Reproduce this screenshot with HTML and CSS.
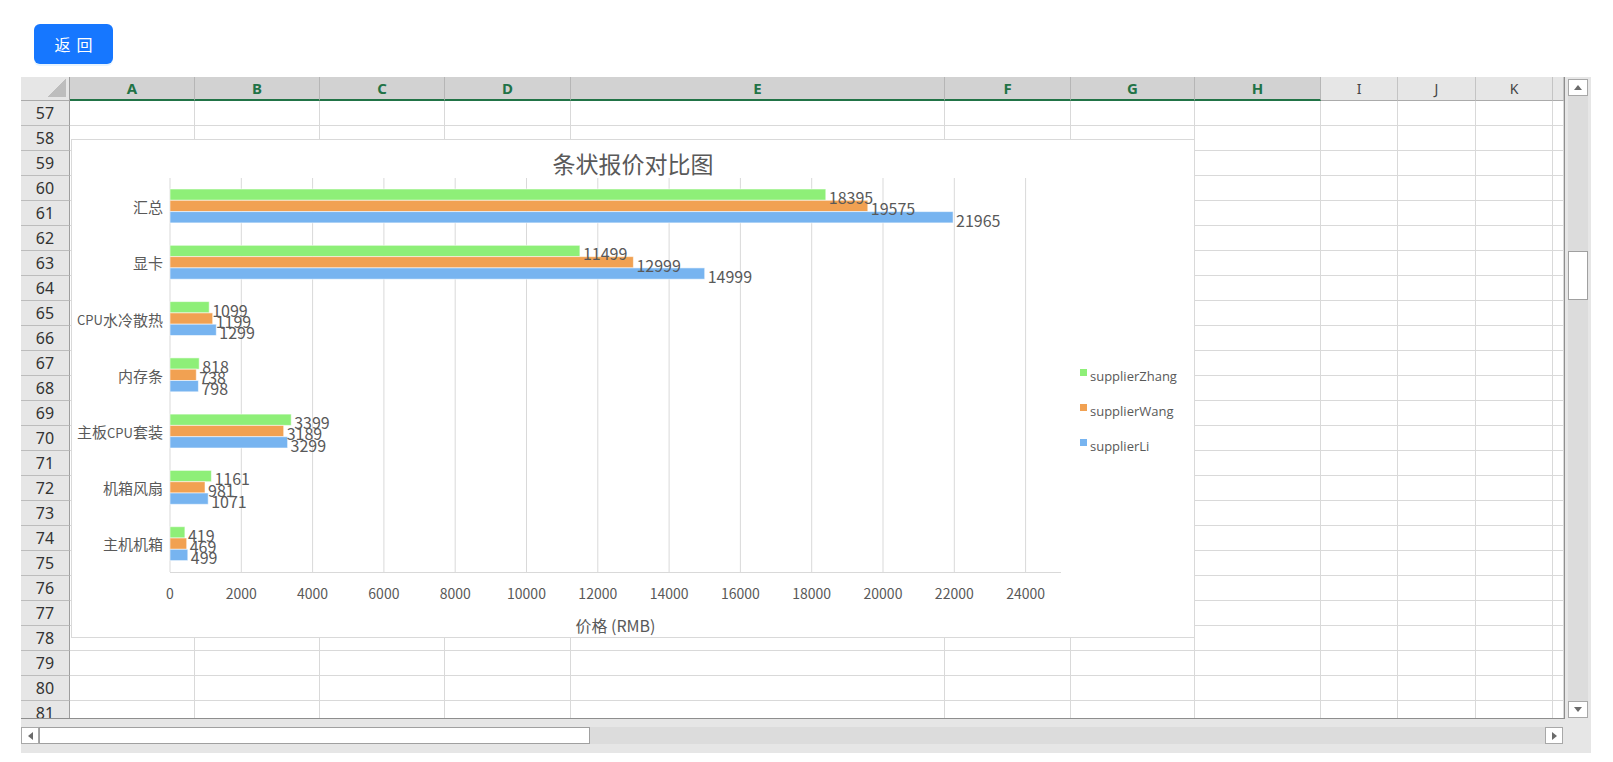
FILE: index.html
```html
<!DOCTYPE html>
<html lang="zh-CN">
<head>
<meta charset="utf-8">
<title>条状报价对比图</title>
<link rel="stylesheet" href="styles.css">
</head>
<body>
<div class="toolbar"><button class="back-btn">返回</button></div>

<div class="sheet">
  <div class="grid">
    <div class="hdr">
      <div class="corner"></div>
      <div class="ch sel">A</div><div class="ch sel">B</div><div class="ch sel">C</div><div class="ch sel">D</div>
      <div class="ch sel">E</div><div class="ch sel">F</div><div class="ch sel">G</div><div class="ch sel">H</div>
      <div class="ch">I</div><div class="ch">J</div><div class="ch">K</div><div class="ch"></div>
    </div>
    <div class="body">
      <div class="row"><div class="rh">57</div><div class="c"></div><div class="c"></div><div class="c"></div><div class="c"></div><div class="c"></div><div class="c"></div><div class="c"></div><div class="c"></div><div class="c"></div><div class="c"></div><div class="c"></div><div class="c"></div></div>
      <div class="row"><div class="rh">58</div><div class="c"></div><div class="c"></div><div class="c"></div><div class="c"></div><div class="c"></div><div class="c"></div><div class="c"></div><div class="c"></div><div class="c"></div><div class="c"></div><div class="c"></div><div class="c"></div></div>
      <div class="row"><div class="rh">59</div><div class="c"></div><div class="c"></div><div class="c"></div><div class="c"></div><div class="c"></div><div class="c"></div><div class="c"></div><div class="c"></div><div class="c"></div><div class="c"></div><div class="c"></div><div class="c"></div></div>
      <div class="row"><div class="rh">60</div><div class="c"></div><div class="c"></div><div class="c"></div><div class="c"></div><div class="c"></div><div class="c"></div><div class="c"></div><div class="c"></div><div class="c"></div><div class="c"></div><div class="c"></div><div class="c"></div></div>
      <div class="row"><div class="rh">61</div><div class="c"></div><div class="c"></div><div class="c"></div><div class="c"></div><div class="c"></div><div class="c"></div><div class="c"></div><div class="c"></div><div class="c"></div><div class="c"></div><div class="c"></div><div class="c"></div></div>
      <div class="row"><div class="rh">62</div><div class="c"></div><div class="c"></div><div class="c"></div><div class="c"></div><div class="c"></div><div class="c"></div><div class="c"></div><div class="c"></div><div class="c"></div><div class="c"></div><div class="c"></div><div class="c"></div></div>
      <div class="row"><div class="rh">63</div><div class="c"></div><div class="c"></div><div class="c"></div><div class="c"></div><div class="c"></div><div class="c"></div><div class="c"></div><div class="c"></div><div class="c"></div><div class="c"></div><div class="c"></div><div class="c"></div></div>
      <div class="row"><div class="rh">64</div><div class="c"></div><div class="c"></div><div class="c"></div><div class="c"></div><div class="c"></div><div class="c"></div><div class="c"></div><div class="c"></div><div class="c"></div><div class="c"></div><div class="c"></div><div class="c"></div></div>
      <div class="row"><div class="rh">65</div><div class="c"></div><div class="c"></div><div class="c"></div><div class="c"></div><div class="c"></div><div class="c"></div><div class="c"></div><div class="c"></div><div class="c"></div><div class="c"></div><div class="c"></div><div class="c"></div></div>
      <div class="row"><div class="rh">66</div><div class="c"></div><div class="c"></div><div class="c"></div><div class="c"></div><div class="c"></div><div class="c"></div><div class="c"></div><div class="c"></div><div class="c"></div><div class="c"></div><div class="c"></div><div class="c"></div></div>
      <div class="row"><div class="rh">67</div><div class="c"></div><div class="c"></div><div class="c"></div><div class="c"></div><div class="c"></div><div class="c"></div><div class="c"></div><div class="c"></div><div class="c"></div><div class="c"></div><div class="c"></div><div class="c"></div></div>
      <div class="row"><div class="rh">68</div><div class="c"></div><div class="c"></div><div class="c"></div><div class="c"></div><div class="c"></div><div class="c"></div><div class="c"></div><div class="c"></div><div class="c"></div><div class="c"></div><div class="c"></div><div class="c"></div></div>
      <div class="row"><div class="rh">69</div><div class="c"></div><div class="c"></div><div class="c"></div><div class="c"></div><div class="c"></div><div class="c"></div><div class="c"></div><div class="c"></div><div class="c"></div><div class="c"></div><div class="c"></div><div class="c"></div></div>
      <div class="row"><div class="rh">70</div><div class="c"></div><div class="c"></div><div class="c"></div><div class="c"></div><div class="c"></div><div class="c"></div><div class="c"></div><div class="c"></div><div class="c"></div><div class="c"></div><div class="c"></div><div class="c"></div></div>
      <div class="row"><div class="rh">71</div><div class="c"></div><div class="c"></div><div class="c"></div><div class="c"></div><div class="c"></div><div class="c"></div><div class="c"></div><div class="c"></div><div class="c"></div><div class="c"></div><div class="c"></div><div class="c"></div></div>
      <div class="row"><div class="rh">72</div><div class="c"></div><div class="c"></div><div class="c"></div><div class="c"></div><div class="c"></div><div class="c"></div><div class="c"></div><div class="c"></div><div class="c"></div><div class="c"></div><div class="c"></div><div class="c"></div></div>
      <div class="row"><div class="rh">73</div><div class="c"></div><div class="c"></div><div class="c"></div><div class="c"></div><div class="c"></div><div class="c"></div><div class="c"></div><div class="c"></div><div class="c"></div><div class="c"></div><div class="c"></div><div class="c"></div></div>
      <div class="row"><div class="rh">74</div><div class="c"></div><div class="c"></div><div class="c"></div><div class="c"></div><div class="c"></div><div class="c"></div><div class="c"></div><div class="c"></div><div class="c"></div><div class="c"></div><div class="c"></div><div class="c"></div></div>
      <div class="row"><div class="rh">75</div><div class="c"></div><div class="c"></div><div class="c"></div><div class="c"></div><div class="c"></div><div class="c"></div><div class="c"></div><div class="c"></div><div class="c"></div><div class="c"></div><div class="c"></div><div class="c"></div></div>
      <div class="row"><div class="rh">76</div><div class="c"></div><div class="c"></div><div class="c"></div><div class="c"></div><div class="c"></div><div class="c"></div><div class="c"></div><div class="c"></div><div class="c"></div><div class="c"></div><div class="c"></div><div class="c"></div></div>
      <div class="row"><div class="rh">77</div><div class="c"></div><div class="c"></div><div class="c"></div><div class="c"></div><div class="c"></div><div class="c"></div><div class="c"></div><div class="c"></div><div class="c"></div><div class="c"></div><div class="c"></div><div class="c"></div></div>
      <div class="row"><div class="rh">78</div><div class="c"></div><div class="c"></div><div class="c"></div><div class="c"></div><div class="c"></div><div class="c"></div><div class="c"></div><div class="c"></div><div class="c"></div><div class="c"></div><div class="c"></div><div class="c"></div></div>
      <div class="row"><div class="rh">79</div><div class="c"></div><div class="c"></div><div class="c"></div><div class="c"></div><div class="c"></div><div class="c"></div><div class="c"></div><div class="c"></div><div class="c"></div><div class="c"></div><div class="c"></div><div class="c"></div></div>
      <div class="row"><div class="rh">80</div><div class="c"></div><div class="c"></div><div class="c"></div><div class="c"></div><div class="c"></div><div class="c"></div><div class="c"></div><div class="c"></div><div class="c"></div><div class="c"></div><div class="c"></div><div class="c"></div></div>
      <div class="row"><div class="rh">81</div><div class="c"></div><div class="c"></div><div class="c"></div><div class="c"></div><div class="c"></div><div class="c"></div><div class="c"></div><div class="c"></div><div class="c"></div><div class="c"></div><div class="c"></div><div class="c"></div></div>

      <div class="chart">
        <svg width="1122" height="497" viewBox="1 1 1122 497" xmlns="http://www.w3.org/2000/svg">
          <text class="title" x="562" y="24" text-anchor="middle" dominant-baseline="central">条状报价对比图</text>
          <g class="gridlines">
            <line x1="99" y1="39" x2="99" y2="433"/>
            <line x1="170.3" y1="39" x2="170.3" y2="433"/>
            <line x1="241.6" y1="39" x2="241.6" y2="433"/>
            <line x1="312.9" y1="39" x2="312.9" y2="433"/>
            <line x1="384.2" y1="39" x2="384.2" y2="433"/>
            <line x1="455.5" y1="39" x2="455.5" y2="433"/>
            <line x1="526.8" y1="39" x2="526.8" y2="433"/>
            <line x1="598.1" y1="39" x2="598.1" y2="433"/>
            <line x1="669.4" y1="39" x2="669.4" y2="433"/>
            <line x1="740.7" y1="39" x2="740.7" y2="433"/>
            <line x1="812" y1="39" x2="812" y2="433"/>
            <line x1="883.3" y1="39" x2="883.3" y2="433"/>
            <line x1="954.6" y1="39" x2="954.6" y2="433"/>
            <line x1="99" y1="433.5" x2="990" y2="433.5"/>
          </g>
          <g class="bars">
            <rect class="g" x="99" y="50" width="655.8" height="11.3"/>
            <rect class="o" x="99" y="61.3" width="697.8" height="11.3"/>
            <rect class="b" x="99" y="72.6" width="783.1" height="11.3"/>
            <rect class="g" x="99" y="106.3" width="409.9" height="11.3"/>
            <rect class="o" x="99" y="117.6" width="463.4" height="11.3"/>
            <rect class="b" x="99" y="128.9" width="534.7" height="11.3"/>
            <rect class="g" x="99" y="162.6" width="39.2" height="11.3"/>
            <rect class="o" x="99" y="173.9" width="42.7" height="11.3"/>
            <rect class="b" x="99" y="185.2" width="46.3" height="11.3"/>
            <rect class="g" x="99" y="218.9" width="29.2" height="11.3"/>
            <rect class="o" x="99" y="230.2" width="26.3" height="11.3"/>
            <rect class="b" x="99" y="241.5" width="28.4" height="11.3"/>
            <rect class="g" x="99" y="275.1" width="121.2" height="11.3"/>
            <rect class="o" x="99" y="286.4" width="113.7" height="11.3"/>
            <rect class="b" x="99" y="297.7" width="117.6" height="11.3"/>
            <rect class="g" x="99" y="331.4" width="41.4" height="11.3"/>
            <rect class="o" x="99" y="342.7" width="35" height="11.3"/>
            <rect class="b" x="99" y="354" width="38.2" height="11.3"/>
            <rect class="g" x="99" y="387.7" width="14.9" height="11.3"/>
            <rect class="o" x="99" y="399" width="16.7" height="11.3"/>
            <rect class="b" x="99" y="410.3" width="17.8" height="11.3"/>
          </g>
          <g class="cat" text-anchor="end">
            <text x="92" y="67" dominant-baseline="central">汇总</text>
            <text x="92" y="123.4" dominant-baseline="central">显卡</text>
            <text x="92" y="180" dominant-baseline="central"><tspan class="latin">CPU</tspan>水冷散热</text>
            <text x="92" y="236" dominant-baseline="central">内存条</text>
            <text x="92" y="292.5" dominant-baseline="central">主板<tspan class="latin">CPU</tspan>套装</text>
            <text x="92" y="348.6" dominant-baseline="central">机箱风扇</text>
            <text x="92" y="404.9" dominant-baseline="central">主机机箱</text>
          </g>
          <g class="val">
            <text x="757.8" y="58" dominant-baseline="central">18395</text>
            <text x="799.8" y="69.3" dominant-baseline="central">19575</text>
            <text x="885.1" y="80.6" dominant-baseline="central">21965</text>
            <text x="511.9" y="114.2" dominant-baseline="central">11499</text>
            <text x="565.4" y="125.5" dominant-baseline="central">12999</text>
            <text x="636.7" y="136.8" dominant-baseline="central">14999</text>
            <text x="141.2" y="170.5" dominant-baseline="central">1099</text>
            <text x="144.7" y="181.8" dominant-baseline="central">1199</text>
            <text x="148.3" y="193.1" dominant-baseline="central">1299</text>
            <text x="131.2" y="226.8" dominant-baseline="central">818</text>
            <text x="128.3" y="238.1" dominant-baseline="central">738</text>
            <text x="130.4" y="249.4" dominant-baseline="central">798</text>
            <text x="223.2" y="283.1" dominant-baseline="central">3399</text>
            <text x="215.7" y="294.4" dominant-baseline="central">3189</text>
            <text x="219.6" y="305.7" dominant-baseline="central">3299</text>
            <text x="143.4" y="339.4" dominant-baseline="central">1161</text>
            <text x="137" y="350.7" dominant-baseline="central">981</text>
            <text x="140.2" y="362" dominant-baseline="central">1071</text>
            <text x="116.9" y="395.7" dominant-baseline="central">419</text>
            <text x="118.7" y="407" dominant-baseline="central">469</text>
            <text x="119.8" y="418.3" dominant-baseline="central">499</text>
          </g>
          <g class="tick" text-anchor="middle">
            <text x="99" y="454" dominant-baseline="central">0</text>
            <text x="170.3" y="454" dominant-baseline="central">2000</text>
            <text x="241.6" y="454" dominant-baseline="central">4000</text>
            <text x="312.9" y="454" dominant-baseline="central">6000</text>
            <text x="384.2" y="454" dominant-baseline="central">8000</text>
            <text x="455.5" y="454" dominant-baseline="central">10000</text>
            <text x="526.8" y="454" dominant-baseline="central">12000</text>
            <text x="598.1" y="454" dominant-baseline="central">14000</text>
            <text x="669.4" y="454" dominant-baseline="central">16000</text>
            <text x="740.7" y="454" dominant-baseline="central">18000</text>
            <text x="812" y="454" dominant-baseline="central">20000</text>
            <text x="883.3" y="454" dominant-baseline="central">22000</text>
            <text x="954.6" y="454" dominant-baseline="central">24000</text>
          </g>
          <text class="axis-title" x="544.5" y="486" text-anchor="middle" dominant-baseline="central">价格 (RMB)</text>
          <g class="legend">
            <rect class="g" x="1009" y="230" width="7" height="7"/>
            <text x="1019" y="237" dominant-baseline="central">supplierZhang</text>
            <rect class="o" x="1009" y="265" width="7" height="7"/>
            <text x="1019" y="272" dominant-baseline="central">supplierWang</text>
            <rect class="b" x="1009" y="300" width="7" height="7"/>
            <text x="1019" y="307" dominant-baseline="central">supplierLi</text>
          </g>
        </svg>
      </div>
    </div>
  </div>

  <div class="vscroll">
    <div class="vtrack">
      <div class="sbtn"><span class="arr up"></span></div>
      <div class="vthumb"></div>
      <div class="sbtn down-btn"><span class="arr down"></span></div>
    </div>
  </div>

  <div class="hscroll">
    <div class="htrack">
      <div class="sbtn h"><span class="arr left"></span></div>
      <div class="hthumb"></div>
      <div class="sbtn h right-btn"><span class="arr right"></span></div>
    </div>
  </div>
</div>
</body>
</html>
```

FILE: styles.css
```css
html, body {
  margin: 0;
  padding: 0;
  background: #ffffff;
}
body {
  font-family: "Noto Sans CJK SC", "Noto Sans", sans-serif;
  color: #333;
}

.toolbar {
  padding: 24px 0 0 34px;
  height: 40px;
}
.back-btn {
  width: 79px;
  height: 40px;
  border: none;
  border-radius: 6px;
  background: #1677ff;
  color: #fff;
  font-family: "Noto Sans CJK SC", sans-serif;
  font-size: 16px;
  letter-spacing: 6px;
  padding: 0 0 0 6px;
  box-shadow: 0 2px 0 rgba(5, 145, 255, 0.1);
  display: flex;
  align-items: center;
  justify-content: center;
  cursor: pointer;
}

.sheet {
  margin: 13px 0 0 21px;
  width: 1570px;
  display: grid;
  grid-template-columns: 1544px 26px;
  grid-template-rows: 642px 34px;
  background: #e6e6e6;
}

.grid {
  background: #fff;
  border-right: 1px solid #8e8e8e;
  border-bottom: 1px solid #8e8e8e;
  overflow: hidden;
  display: flex;
  flex-direction: column;
}

.hdr, .row {
  display: grid;
  grid-template-columns: 49px 125px 125px 125px 126px 374px 126px 124px 126px 77px 78px 77px 11px;
}
.hdr {
  height: 24px;
  flex: none;
}
.corner {
  background: #e6e6e6 linear-gradient(to bottom right, transparent 50%, #bdbdbd 50%) no-repeat right 3px bottom 3px / 19px 18px;
  border-right: 1px solid #9e9e9e;
  border-bottom: 1px solid #ababab;
}
.ch {
  box-sizing: border-box;
  background: #e6e6e6;
  border-right: 1px solid #c4c4c4;
  border-bottom: 1px solid #ababab;
  font-family: "Noto Sans", sans-serif;
  font-size: 14px;
  color: #444;
  display: flex;
  align-items: center;
  justify-content: center;
  line-height: 1;
}
.ch.sel {
  background: #d2d2d2;
  border-right: 1px solid #b6b6b6;
  border-bottom: 2px solid #217346;
  color: #217346;
  font-weight: bold;
  font-size: 15px;
  padding-top: 1px;
}

.body {
  position: relative;
  flex: 1;
  overflow: hidden;
}
.row {
  height: 25px;
}
.rh {
  box-sizing: border-box;
  background: #e6e6e6;
  border-right: 1px solid #9e9e9e;
  border-bottom: 1px solid #bcbcbc;
  font-family: "Noto Sans", sans-serif;
  font-size: 16px;
  color: #333;
  display: flex;
  align-items: center;
  justify-content: center;
  line-height: 1;
}
.c {
  box-sizing: border-box;
  border-right: 1px solid #d9d9d9;
  border-bottom: 1px solid #d9d9d9;
}

.chart {
  position: absolute;
  left: 50px;
  top: 38px;
  width: 1124px;
  height: 499px;
  box-sizing: border-box;
  border: 1px solid #d9d9d9;
  background: #fff;
}
.chart svg {
  display: block;
}
.chart text {
  font-family: "Noto Sans CJK SC", sans-serif;
  fill: #595959;
}
.chart .title {
  font-size: 23px;
}
.gridlines line {
  stroke: #d9d9d9;
  stroke-width: 1;
}
.bars rect {
  stroke: rgba(255, 255, 255, 0.55);
  stroke-width: 1;
}
.g { fill: #8eef78; }
.o { fill: #f1a152; }
.b { fill: #77b4f0; }
.chart .cat text {
  font-size: 15px;
}
.chart .cat .latin {
  font-size: 13px;
}
.chart .val text {
  font-size: 16px;
}
.chart .tick text {
  font-size: 14px;
}
.chart .axis-title {
  font-size: 16px;
}
.chart .legend text {
  font-family: "Open Sans", sans-serif;
  font-size: 13px;
}

.vscroll {
  padding: 2px 3px 1px 3px;
  display: flex;
}
.vtrack {
  flex: 1;
  background: #dcdcdc;
  display: flex;
  flex-direction: column;
}
.sbtn {
  box-sizing: border-box;
  height: 17px;
  background: #fff;
  border: 1px solid #a8a8a8;
  display: flex;
  align-items: center;
  justify-content: center;
  flex: none;
}
.vthumb {
  margin-top: 155px;
  height: 49px;
  background: #fff;
  border: 1px solid #a0a0a0;
  box-sizing: border-box;
}
.down-btn {
  margin-top: auto;
}
.arr {
  width: 0;
  height: 0;
}
.arr.up {
  border-left: 4px solid transparent;
  border-right: 4px solid transparent;
  border-bottom: 5px solid #6b6b6b;
}
.arr.down {
  border-left: 4px solid transparent;
  border-right: 4px solid transparent;
  border-top: 5px solid #6b6b6b;
}
.arr.left {
  border-top: 4px solid transparent;
  border-bottom: 4px solid transparent;
  border-right: 5px solid #6b6b6b;
}
.arr.right {
  border-top: 4px solid transparent;
  border-bottom: 4px solid transparent;
  border-left: 5px solid #6b6b6b;
}

.hscroll {
  grid-column: 1 / 3;
  padding: 8px 28px 9px 0;
}
.htrack {
  height: 17px;
  background: #dcdcdc;
  display: flex;
}
.sbtn.h {
  width: 18px;
  height: 17px;
}
.hthumb {
  width: 551px;
  height: 17px;
  box-sizing: border-box;
  background: #fff;
  border: 1px solid #a0a0a0;
}
.right-btn {
  margin-left: auto;
}
```
